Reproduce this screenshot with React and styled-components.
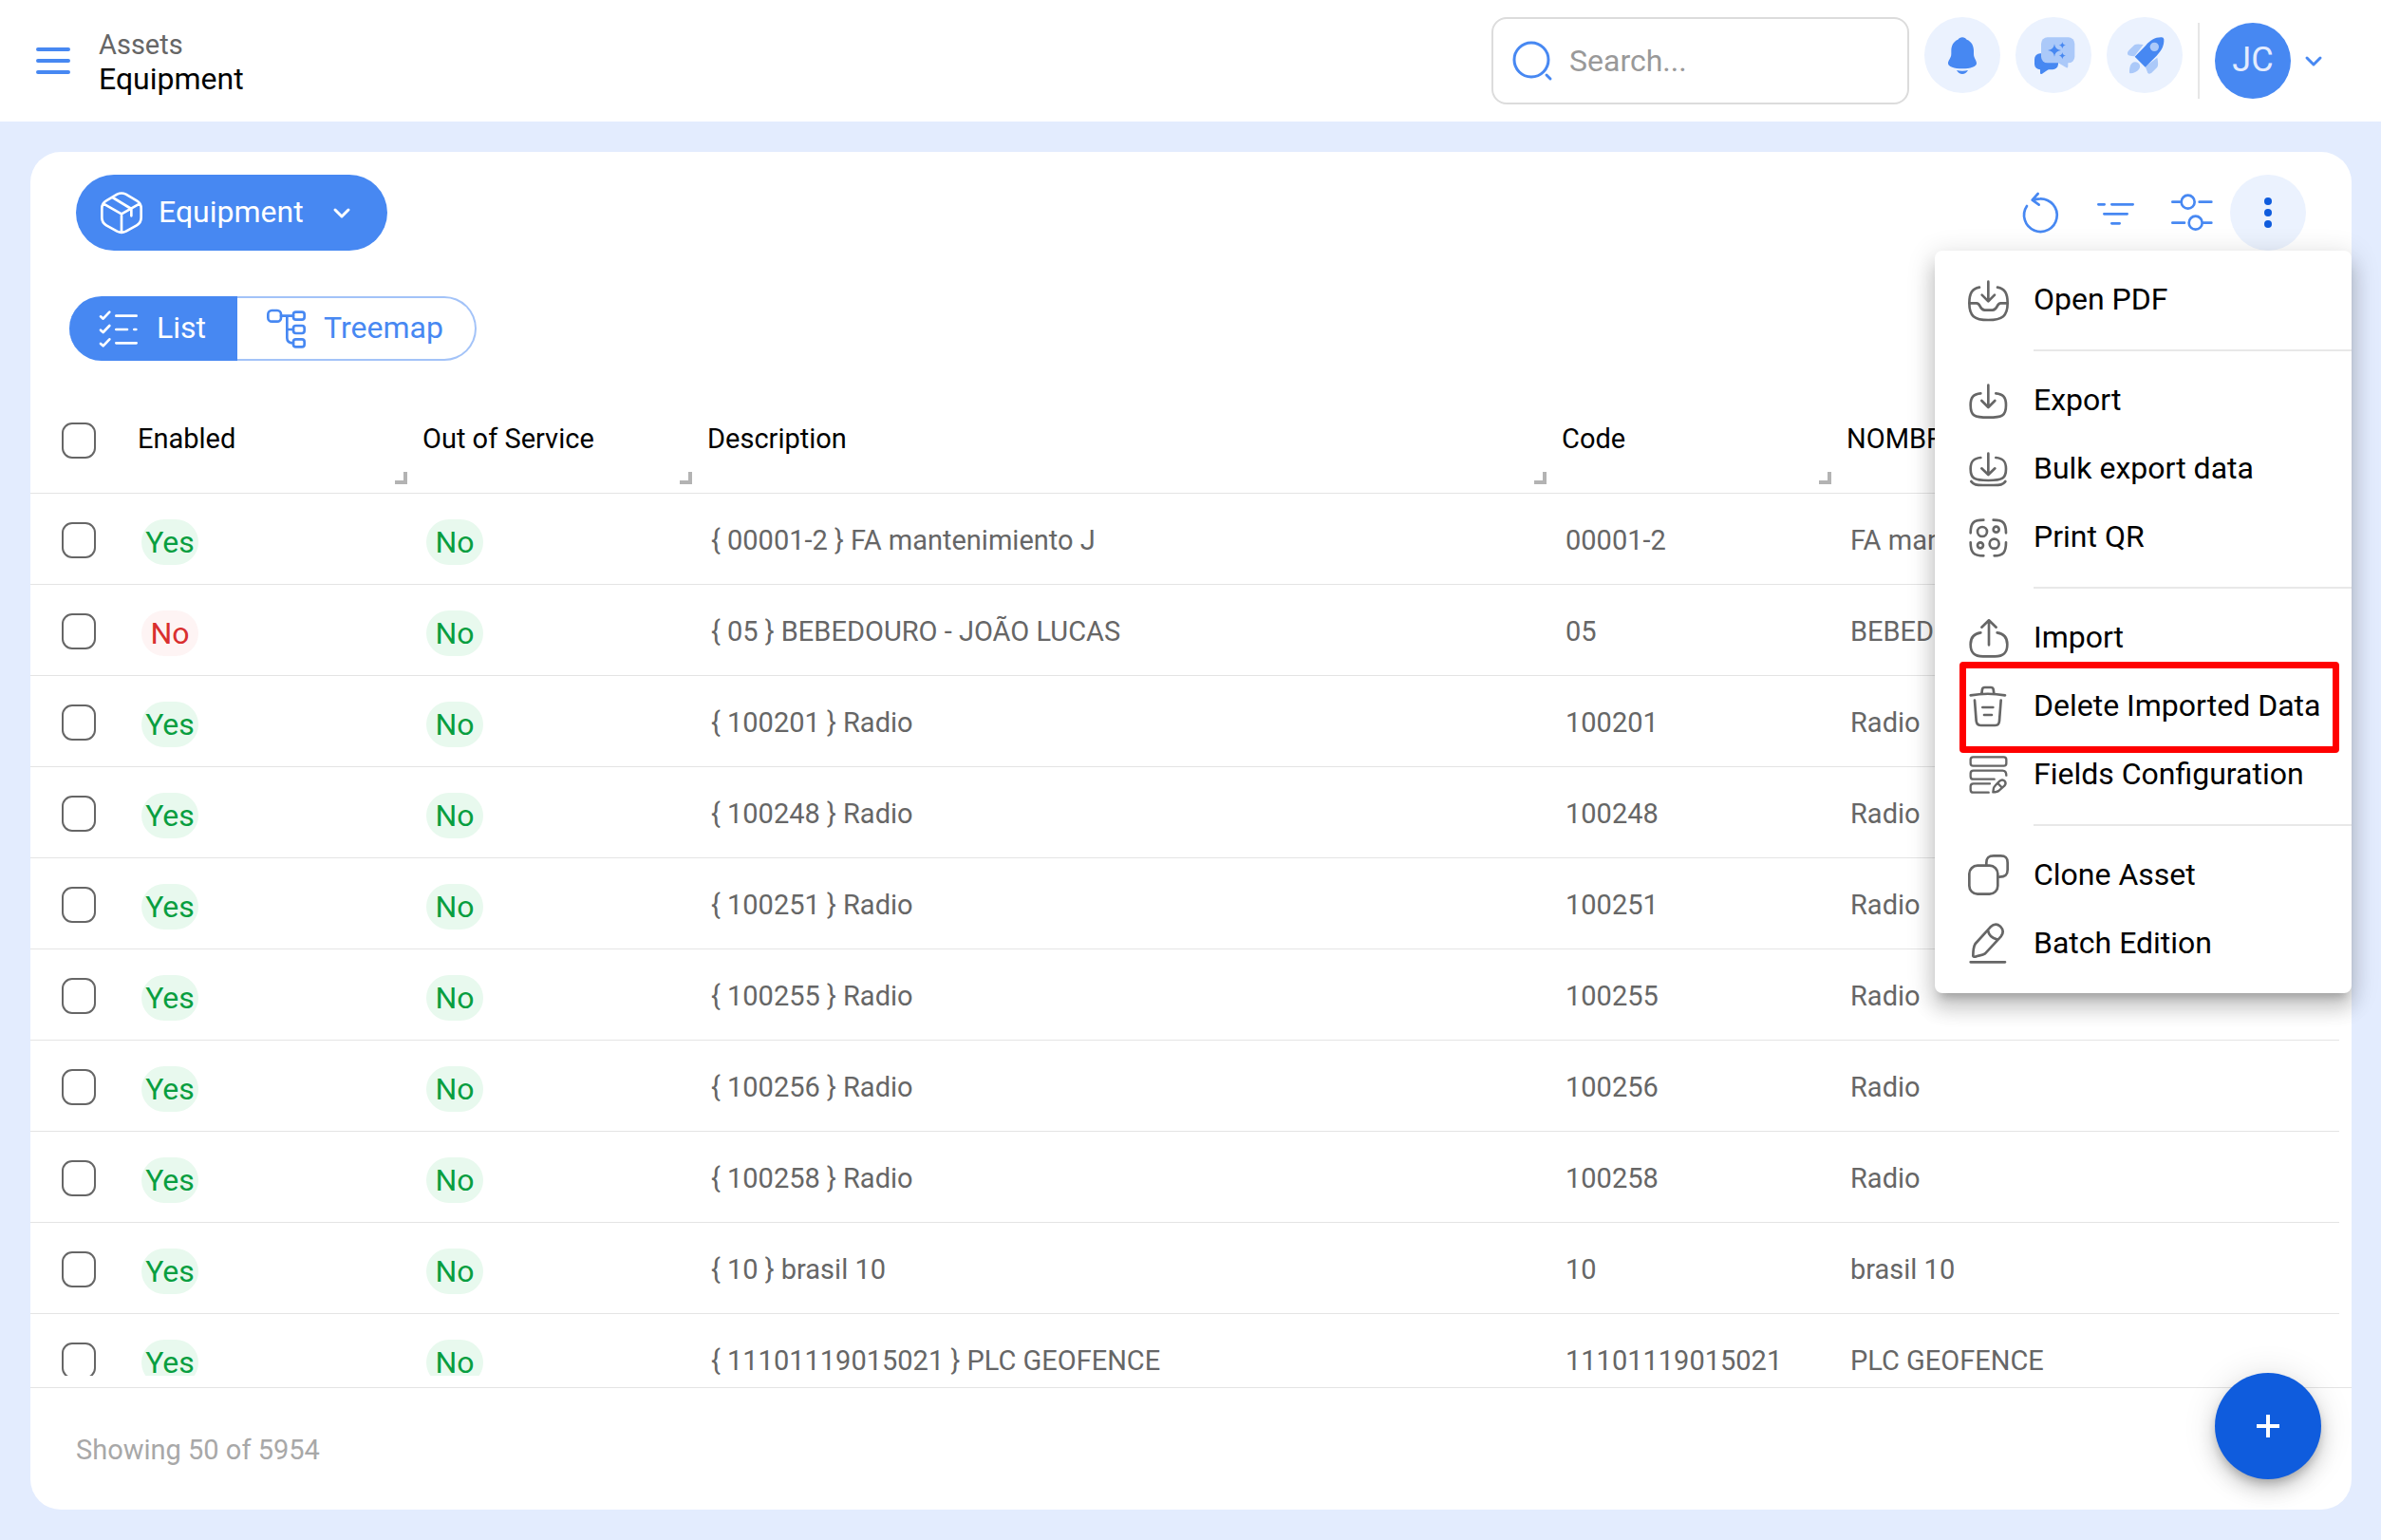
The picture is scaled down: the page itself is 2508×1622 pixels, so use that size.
import React from "react";
import styled, { createGlobalStyle, css } from "styled-components";

const blue = "#4788f2";
const deepBlue = "#0f5cdd";
const paleBlue = "#ebf2fe";
const softBlue = "#abc9f9";
const line = "#e4e4e4";
const grey = "#666666";

const GlobalStyle = createGlobalStyle`
  *, *::before, *::after { box-sizing: border-box; }
  body {
    margin: 0;
    background: #e3ecfe;
    color: #000;
    font-family: Roboto, "Noto Sans", sans-serif;
    font-size: 29px;
    line-height: 36px;
  }
  button, input { font: inherit; color: inherit; }
  button { border: 0; padding: 0; background: none; cursor: pointer; }
`;

/* ---------- icons ---------- */

const Svg = styled.svg.attrs({ "aria-hidden": true })`
  flex: none;
  display: block;
  width: ${(p) => p.$w || 44}px;
  height: ${(p) => p.$h || 44}px;
  overflow: visible;
  fill: none;
  stroke: currentColor;
  stroke-width: ${(p) => p.$stroke || 8};
  stroke-linecap: round;
  stroke-linejoin: round;
`;

const Icon = ({ children, ...rest }) => (
  <Svg viewBox="0 0 132 132" {...rest}>
    {children}
  </Svg>
);

const Chevron = () => (
  <Svg viewBox="0 0 18 12" $w={18} $h={12} $stroke={3}>
    <path d="M2 3 L9 10 L16 3" />
  </Svg>
);

const BurgerIcon = () => (
  <Svg viewBox="0 0 36 30" $w={36} $h={30} $stroke={4}>
    <path d="M2 3H34M2 15H34M2 27H34" />
  </Svg>
);

const SearchIcon = () => (
  <Svg viewBox="0 0 42 42" $w={42} $h={42} $stroke={3}>
    <circle cx="20" cy="20" r="18" />
    <path d="M36 36L40 40" />
  </Svg>
);

const PlusIcon = () => (
  <Svg viewBox="0 0 26 26" $w={26} $h={26} $stroke={4}>
    <path strokeLinecap="butt" d="M13 1V25M1 13H25" />
  </Svg>
);

const BellIcon = () => (
  <Icon>
    <g fill={blue} stroke="none">
      <path d="M66 10C72 10 77 13 80 17C95 23 102 36 102 52V62C102 76 111 82 111 92C111 102 92 109 66 109C40 109 21 102 21 92C21 82 31 76 31 62V52C31 36 38 23 52 17C55 13 60 10 66 10Z" />
      <path d="M48 114Q66 118 84 114Q77 126 66 126Q55 126 48 114Z" />
    </g>
  </Icon>
);

const ChatIcon = () => (
  <Icon>
    <g stroke="none" fill={blue}>
      <rect x="6" y="61" width="75" height="51" rx="18" />
      <path d="M24 106V122Q24 128 30 125L52 110Z" />
      <rect fill={softBlue} x="27" y="10" width="106" height="81" rx="20" />
      <path fill={softBlue} d="M80 90L107 106Q112 108 112 101V88Z" />
      <path d="M69 31Q71 49 90 51Q71 53 69 71Q67 53 48 51Q67 49 69 31Z" />
      <path d="M94 24Q95 34 105 35Q95 36 94 46Q93 36 83 35Q93 34 94 24Z" />
      <path d="M94 57Q95 67 105 68Q95 69 94 79Q93 69 83 68Q93 67 94 57Z" />
    </g>
  </Icon>
);

const RocketIcon = () => (
  <Icon>
    <g stroke="none" fill={softBlue}>
      <path d="M12 62Q11 56 17 50L34 34Q40 29 62 33L34 70Q12 68 12 62Z" />
      <path d="M106 74Q111 98 106 104L88 122Q76 130 74 118L68 102Z" />
      <path d="M18 120C18 104 22 88 36 88C50 88 56 102 48 111C42 119 32 123 21 124Q18 124 18 120Z" />
      <path fill={blue} d="M120 10Q126 10 127 16C128 36 120 52 104 68L68 104L35 71L70 35C84 19 100 9 120 10Z" />
      <circle cx="97" cy="40" r="14" />
    </g>
  </Icon>
);

const RefreshIcon = () => (
  <Icon>
    <path d="M24 45A52 52 0 1 0 66 22Q52 22 43 27M59 6L41 26L62 41" />
  </Icon>
);

const FilterIcon = () => (
  <Icon>
    <path d="M10 40H29M52 40H119M28 70H101M52 100H77" />
  </Icon>
);

const SlidersIcon = () => (
  <Icon>
    <path d="M4 32H28M89 32H127M4 98H42M102 98H127" />
    <circle cx="53" cy="32" r="21" />
    <circle cx="77" cy="98" r="21" />
  </Icon>
);

const MoreIcon = () => (
  <Icon>
    <g fill={deepBlue} stroke="none">
      <circle cx="66" cy="30" r="12" />
      <circle cx="66" cy="66" r="12" />
      <circle cx="66" cy="102" r="12" />
    </g>
  </Icon>
);

const BoxIcon = () => (
  <Icon>
    <path d="M52 8Q66 1 80 8L114 28Q128 36 128 52V82Q128 98 114 106L80 125Q66 132 52 125L18 106Q4 98 4 82V52Q4 36 18 28ZM8 37L66 70L124 37M66 70V128M38 18L97 54V76" />
  </Icon>
);

const ListIcon = () => (
  <Icon>
    <path d="M9 28L17 35L37 14M9 71L17 78L37 57M9 114L17 121L37 100M58 26H122M58 69H93M115 69H121M58 112H122" />
  </Icon>
);

const TreeIcon = () => (
  <Icon>
    <rect x="10" y="9" width="41" height="35" rx="12" />
    <rect x="90" y="14" width="35" height="24" rx="8" />
    <rect x="90" y="57" width="35" height="24" rx="8" />
    <rect x="90" y="100" width="35" height="24" rx="8" />
    <path d="M51 26H90M70 26V96Q70 112 90 112M70 69H90" />
  </Icon>
);

const PdfIcon = () => (
  <Icon>
    <path d="M39 26C16 30 7 44 7 76C7 116 22 129 67 129C112 129 128 116 128 76C128 44 119 30 96 26M67 8V70M47 50L67 70L87 50M8 76H30C44 76 38 98 56 98H80C98 98 92 76 106 76H127" />
  </Icon>
);

const ExportIcon = () => (
  <Icon>
    <path d="M43 43C20 45 11 55 11 80C11 113 22 119 67 119C112 119 123 113 123 80C123 55 114 45 91 43M67 17V86M46 66L67 87L88 66" />
  </Icon>
);

const BulkIcon = () => (
  <Icon>
    <path d="M43 30C20 32 11 42 11 65C11 96 22 102 67 102C112 102 123 96 123 65C123 42 114 32 91 30M67 17V83M46 64L67 84L88 64M13 105C20 116 30 117 50 117H84C104 117 114 116 121 105" />
  </Icon>
);

const QrIcon = () => (
  <Icon>
    <path d="M52 11C20 11 11 20 11 52M83 11C114 11 123 20 123 52M11 82C11 114 20 124 52 124M86 124C114 124 123 114 123 82" />
    <circle cx="48" cy="48" r="15" />
    <circle cx="92" cy="41" r="9" />
    <circle cx="42" cy="91" r="9" />
    <circle cx="86" cy="86" r="15" />
  </Icon>
);

const ImportIcon = () => (
  <Icon>
    <path d="M43 49C22 52 11 64 11 86C11 114 24 124 50 124H88C114 124 127 114 127 86C127 64 116 52 95 49M69 10V88M46 32L69 10L92 32" />
  </Icon>
);

const TrashIcon = () => (
  <Icon>
    <path d="M11 31C45 25 86 25 120 31M46 26L48 12C49 7 52 6 56 6H75C79 6 82 7 83 12L85 26M24 47L29 112C30 122 34 126 44 126H88C98 126 101 122 102 112L107 47M49 69H82M54 93H78" />
  </Icon>
);

const FieldsIcon = () => (
  <Icon $stroke={7}>
    <rect x="11" y="10" width="113" height="28" rx="8" />
    <path d="M86 80H20Q11 80 11 71V62Q11 53 20 53H112Q124 53 124 68M72 94H20Q11 94 11 103V113Q11 122 20 122H68" />
    <path d="M82 121L84 108Q86 102 103 86Q111 79 119 86Q125 93 118 101L101 116Q96 121 82 121M97 93L110 106" />
  </Icon>
);

const CloneIcon = () => (
  <Icon>
    <rect x="7" y="35" width="90" height="90" rx="26" />
    <path d="M61 32V26C61 10 68 4 84 4H106C122 4 128 10 128 26V48C128 64 122 71 102 71" />
  </Icon>
);

const PencilIcon = () => (
  <Icon>
    <path d="M19 104C19 95 20 76 26 66L74 13Q90 -2 105 11Q120 27 107 43L57 97C47 104 38 102 26 107Q19 108 19 104ZM66 24Q70 46 94 52M11 124H120" />
  </Icon>
);

/* ---------- layout ---------- */

const Page = styled.div`
  display: flex;
  flex-direction: column;
  height: 100vh;
`;

const TopBar = styled.header`
  flex: none;
  display: flex;
  align-items: center;
  height: 128px;
  padding: 0 62px 0 38px;
  background: #fff;
`;

const PlainButton = styled.button`
  color: ${blue};
`;

const Crumbs = styled.div`
  padding-top: 2px;
  margin-left: 30px;
  margin-right: auto;
`;

const CrumbParent = styled.div`
  color: ${grey};
`;

const CrumbTitle = styled.h1`
  margin: 0;
  font-size: 32px;
  font-weight: 400;
  line-height: 36px;
`;

const TopActions = styled.div`
  display: flex;
  align-items: center;
  gap: 16px;
`;

const SearchBox = styled.label`
  display: flex;
  align-items: center;
  gap: 18px;
  width: 440px;
  height: 92px;
  padding: 0 20px;
  border: 2px solid #dcdcdc;
  border-radius: 16px;
  color: ${blue};
`;

const SearchInput = styled.input.attrs({ type: "search" })`
  flex: 1;
  min-width: 0;
  padding: 0;
  border: 0;
  outline: 0;
  background: none;
  color: #000;
  font-size: 32px;
  line-height: 40px;
  appearance: none;
  &::placeholder { color: #999; opacity: 1; }
`;

const RoundGroup = styled.div`
  display: flex;
  gap: 16px;
  padding-bottom: 12px;
`;

const RoundButton = styled.button`
  display: grid;
  place-items: center;
  width: 80px;
  height: 80px;
  border-radius: 50%;
  color: ${blue};
  background: ${(p) => (p.$filled ? paleBlue : "none")};
`;

const Divider = styled.span`
  width: 2px;
  height: 80px;
  background: #e6e6e6;
`;

const UserButton = styled.button`
  display: flex;
  align-items: center;
  gap: 15px;
  color: ${blue};
`;

const Avatar = styled.span`
  display: grid;
  place-items: center;
  width: 80px;
  height: 80px;
  padding-bottom: 2px;
  border-radius: 50%;
  background: ${blue};
  color: #e3ecfe;
  font-size: 36px;
`;

const Main = styled.main`
  flex: 1;
  min-height: 0;
  display: flex;
  padding: 32px 31px 32px 32px;
`;

const Card = styled.section`
  position: relative;
  flex: 1;
  min-width: 0;
  display: flex;
  flex-direction: column;
  background: #fff;
  border-radius: 32px;
`;

const CardHeader = styled.div`
  display: flex;
  justify-content: space-between;
  padding: 24px 48px;
`;

const TypeButton = styled.button`
  display: flex;
  align-items: center;
  height: 80px;
  padding: 0 39px 0 26px;
  border-radius: 40px;
  background: ${blue};
  color: #fff;
  font-size: 32px;
`;

const TypeLabel = styled.span`
  padding-bottom: 2px;
  margin: 0 31px 0 17px;
`;

const Toolbar = styled.div`
  position: relative;
  display: flex;
`;

const Toggle = styled.div`
  flex: none;
  display: flex;
  align-self: flex-start;
  height: 68px;
  margin: 24px 0 32px 41px;
`;

const ToggleButton = styled.button`
  display: flex;
  align-items: center;
  gap: 18px;
  padding: 0 33px 0 29px;
  border: 2px solid #a3c3f8;
  border-left-width: 0;
  border-radius: 0 34px 34px 0;
  color: ${blue};
  font-size: 32px;
  ${(p) =>
    p.$active &&
    css`
      padding: 0 31px 0 30px;
      border-color: ${blue};
      border-radius: 34px 0 0 34px;
      background: ${blue};
      color: #fff;
    `}
`;

const ToggleText = styled.span`
  padding-bottom: 2px;
`;

/* ---------- menu ---------- */

const Menu = styled.ul`
  position: absolute;
  z-index: 2;
  top: 100%;
  right: -48px;
  width: 439px;
  margin: 0;
  padding: 16px 0;
  list-style: none;
  background: #fff;
  border-radius: 8px;
  box-shadow: 0 10px 10px -6px rgba(0, 0, 0, 0.2), 0 16px 20px 2px rgba(0, 0, 0, 0.14),
    0 6px 28px 4px rgba(0, 0, 0, 0.12);
`;

const MenuEntry = styled.li`
  position: relative;
`;

const MenuButton = styled.button`
  display: flex;
  align-items: center;
  gap: 26px;
  width: 100%;
  height: 72px;
  padding-left: 34px;
  color: ${grey};
  font-size: 32px;
  white-space: nowrap;
`;

const MenuText = styled.span`
  padding-bottom: 2px;
  color: #000;
`;

const MenuRule = styled.li`
  height: 2px;
  margin: 16px 0 16px 104px;
  background: #e8e8e8;
`;

const Highlight = styled.span`
  position: absolute;
  z-index: 1;
  inset: -11px 13px -13px 26px;
  border: 7px solid #f00;
  border-radius: 4px;
  pointer-events: none;
`;

/* ---------- table ---------- */

const Scroll = styled.div`
  flex: 1;
  min-height: 0;
  margin: 0 13px 12px 0;
  overflow: auto;
  scrollbar-width: none;
`;

const Table = styled.table`
  width: 100%;
  table-layout: fixed;
  border-collapse: separate;
  border-spacing: 0;
`;

const Col = styled.col`
  width: ${(p) => p.$w}px;
`;

const HeadCell = styled.th`
  position: relative;
  height: 108px;
  padding: 32px 12px 0;
  border-bottom: 1px solid ${line};
  font-weight: 400;
  text-align: left;
  vertical-align: top;
  white-space: nowrap;
`;

const Grip = styled.span`
  position: absolute;
  right: 4px;
  bottom: 9px;
  width: 13px;
  height: 13px;
  border: solid #b3b3b3;
  border-width: 0 4px 4px 0;
`;

const Cell = styled.td`
  height: 96px;
  padding: 2px 16px 0;
  border-bottom: 1px solid ${line};
  color: ${grey};
  white-space: nowrap;
`;

const Check = styled.input.attrs({ type: "checkbox" })`
  appearance: none;
  display: block;
  width: 36px;
  height: 38px;
  margin: ${(p) => (p.$head ? "1px 0 0 21px" : "0 0 0 17px")};
  border: 2px solid ${grey};
  border-radius: 11px;
  background: #fff;
  &:checked { background: ${blue}; border-color: ${blue}; }
`;

const Badge = styled.span`
  display: grid;
  place-items: center;
  width: 60px;
  height: 48px;
  margin-top: 4px;
  border-radius: 24px;
  font-size: 32px;
  background: ${(p) => (p.$bad ? "#fef4f4" : "#e8f9ee")};
  color: ${(p) => (p.$bad ? "#d92f2f" : "#089e40")};
`;

const Footer = styled.footer`
  flex: none;
  display: flex;
  align-items: center;
  height: 129px;
  padding: 2px 48px 0;
  border-top: 1px solid ${line};
  color: #a8a8a8;
`;

const AddButton = styled.button`
  position: absolute;
  right: 32px;
  bottom: 32px;
  display: grid;
  place-items: center;
  width: 112px;
  height: 112px;
  border-radius: 50%;
  background: ${deepBlue};
  color: #fff;
  box-shadow: 0 6px 10px -2px rgba(0, 0, 0, 0.2), 0 12px 20px 0 rgba(0, 0, 0, 0.14),
    0 2px 36px 0 rgba(0, 0, 0, 0.12);
`;

/* ---------- data ---------- */

const menuGroups = [
  [{ label: "Open PDF", icon: PdfIcon }],
  [
    { label: "Export", icon: ExportIcon },
    { label: "Bulk export data", icon: BulkIcon },
    { label: "Print QR", icon: QrIcon },
  ],
  [
    { label: "Import", icon: ImportIcon },
    { label: "Delete Imported Data", icon: TrashIcon, highlighted: true },
    { label: "Fields Configuration", icon: FieldsIcon },
  ],
  [
    { label: "Clone Asset", icon: CloneIcon },
    { label: "Batch Edition", icon: PencilIcon },
  ],
];

const columns = [
  { title: "Enabled", width: 300 },
  { title: "Out of Service", width: 300 },
  { title: "Description", width: 900 },
  { title: "Code", width: 300 },
  { title: "NOMBRE" },
];

const rows = [
  { code: "00001-2", name: "FA mantenimiento J", enabled: true },
  { code: "05", name: "BEBEDOURO - JOÃO LUCAS", enabled: false },
  { code: "100201", name: "Radio", enabled: true },
  { code: "100248", name: "Radio", enabled: true },
  { code: "100251", name: "Radio", enabled: true },
  { code: "100255", name: "Radio", enabled: true },
  { code: "100256", name: "Radio", enabled: true },
  { code: "100258", name: "Radio", enabled: true },
  { code: "10", name: "brasil 10", enabled: true },
  { code: "11101119015021", name: "PLC GEOFENCE", enabled: true },
];

function OptionsMenu() {
  return (
    <Menu>
      {menuGroups.map((group, g) => (
        <React.Fragment key={g}>
          {g > 0 && <MenuRule role="separator" />}
          {group.map(({ label, icon: ItemIcon, highlighted }) => (
            <MenuEntry key={label}>
              <MenuButton type="button">
                <ItemIcon />
                <MenuText>{label}</MenuText>
              </MenuButton>
              {highlighted && <Highlight />}
            </MenuEntry>
          ))}
        </React.Fragment>
      ))}
    </Menu>
  );
}

function EquipmentTable() {
  return (
    <Scroll>
      <Table>
        <colgroup>
          <Col $w={101} />
          {columns.map((c) => (c.width ? <Col key={c.title} $w={c.width} /> : <col key={c.title} />))}
        </colgroup>
        <thead>
          <tr>
            <HeadCell>
              <Check $head aria-label="Select all" />
            </HeadCell>
            {columns.map((c) => (
              <HeadCell key={c.title} scope="col">
                {c.title}
                {c.width && <Grip />}
              </HeadCell>
            ))}
          </tr>
        </thead>
        <tbody>
          {rows.map((r) => (
            <tr key={r.code}>
              <Cell>
                <Check aria-label={`Select ${r.code}`} />
              </Cell>
              <Cell>
                <Badge $bad={!r.enabled}>{r.enabled ? "Yes" : "No"}</Badge>
              </Cell>
              <Cell>
                <Badge>No</Badge>
              </Cell>
              <Cell>{`{ ${r.code} } ${r.name}`}</Cell>
              <Cell>{r.code}</Cell>
              <Cell>{r.name}</Cell>
            </tr>
          ))}
        </tbody>
      </Table>
    </Scroll>
  );
}

export default function App() {
  return (
    <Page>
      <GlobalStyle />
      <TopBar>
        <PlainButton type="button" aria-label="Main menu">
          <BurgerIcon />
        </PlainButton>
        <Crumbs>
          <CrumbParent>Assets</CrumbParent>
          <CrumbTitle>Equipment</CrumbTitle>
        </Crumbs>
        <TopActions>
          <SearchBox>
            <SearchIcon />
            <SearchInput aria-label="Search" placeholder="Search..." />
          </SearchBox>
          <RoundGroup>
            <RoundButton type="button" $filled aria-label="Notifications">
              <BellIcon />
            </RoundButton>
            <RoundButton type="button" $filled aria-label="Assistant">
              <ChatIcon />
            </RoundButton>
            <RoundButton type="button" $filled aria-label="What's new">
              <RocketIcon />
            </RoundButton>
          </RoundGroup>
          <Divider />
          <UserButton type="button" aria-label="Account">
            <Avatar>JC</Avatar>
            <Chevron />
          </UserButton>
        </TopActions>
      </TopBar>
      <Main>
        <Card>
          <CardHeader>
            <TypeButton type="button">
              <BoxIcon />
              <TypeLabel>Equipment</TypeLabel>
              <Chevron />
            </TypeButton>
            <Toolbar>
              <RoundButton type="button" aria-label="Refresh">
                <RefreshIcon />
              </RoundButton>
              <RoundButton type="button" aria-label="Filter">
                <FilterIcon />
              </RoundButton>
              <RoundButton type="button" aria-label="Settings">
                <SlidersIcon />
              </RoundButton>
              <RoundButton type="button" $filled aria-label="More options">
                <MoreIcon />
              </RoundButton>
              <OptionsMenu />
            </Toolbar>
          </CardHeader>
          <Toggle>
            <ToggleButton type="button" $active>
              <ListIcon />
              <ToggleText>List</ToggleText>
            </ToggleButton>
            <ToggleButton type="button">
              <TreeIcon />
              <ToggleText>Treemap</ToggleText>
            </ToggleButton>
          </Toggle>
          <EquipmentTable />
          <Footer>Showing 50 of 5954</Footer>
          <AddButton type="button" aria-label="Add equipment">
            <PlusIcon />
          </AddButton>
        </Card>
      </Main>
    </Page>
  );
}
